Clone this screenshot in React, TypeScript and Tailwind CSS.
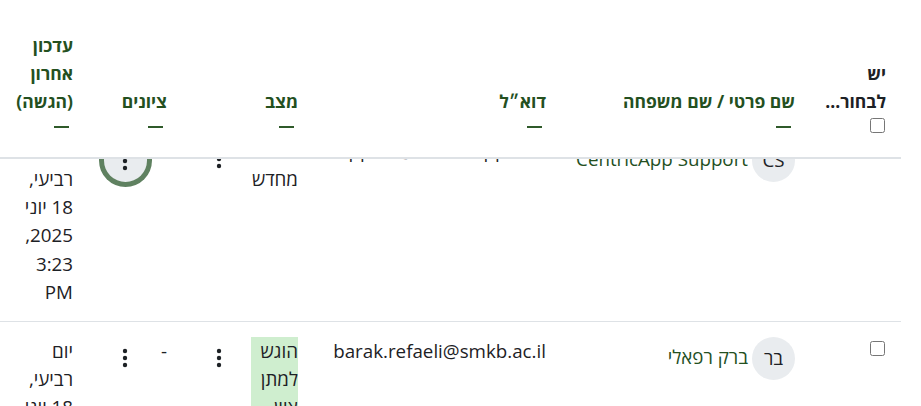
import React from 'react';

function HeaderCell({ title }: { title: string }) {
  return (
    <div className="pl-3 flex flex-col justify-end items-start">
      <div className="font-bold text-[17.5px] text-[#24501f]">{title}</div>
      <div className="w-[15px] h-[2px] bg-[#2f5a2a] mr-[4px] mt-[11px] mb-[29px]" />
    </div>
  );
}

function Kebab() {
  return (
    <svg width="6" height="20" viewBox="0 0 6 20" className="text-[#1d2125]" fill="currentColor">
      <circle cx="3" cy="3" r="2.2" />
      <circle cx="3" cy="10" r="2.2" />
      <circle cx="3" cy="17" r="2.2" />
    </svg>
  );
}

function MenuButton({ focused }: { focused?: boolean }) {
  const ringClass = focused
    ? 'w-[43px] h-[43px] rounded-full flex items-center justify-center shrink-0 bg-[#e9ecef] ring-[5px] ring-[#5f8160]'
    : 'w-[43px] h-[43px] rounded-full flex items-center justify-center shrink-0';
  return (
    <button className={ringClass}>
      <Kebab />
    </button>
  );
}

const grid = 'grid grid-cols-[91px_249px_248px_131px_94px_73px] pr-[15px]';

export default function App() {
  return (
    <div dir="rtl" className="w-[921px] h-[406px] overflow-hidden bg-white text-[18.75px] leading-[28.125px] text-[#1d2125] font-['Open_Sans',sans-serif] flex flex-col">
      <div className="w-[901px] h-[406px] self-end flex flex-col">
        <div className="h-[159px] shrink-0 border-b-2 border-[#dee2e6] z-10 bg-white">
          <div className={`${grid} h-[157px]`}>
            <div className="pl-3 flex flex-col justify-end">
              <div className="font-bold text-[17.5px]">יש לבחור...</div>
              <input type="checkbox" className="w-[15px] h-[15px] mt-[3px] mb-[24px] mr-[1px] block" />
            </div>
            <HeaderCell title="שם פרטי / שם משפחה" />
            <HeaderCell title="דוא״ל" />
            <HeaderCell title="מצב" />
            <HeaderCell title="ציונים" />
            <HeaderCell title="עדכון אחרון (הגשה)" />
          </div>
        </div>
        <div className="flex-1 overflow-hidden">
          <div className="-mt-[37px]">
            <div className={`${grid} py-[15px] border-b border-[#dee2e6]`}>
              <div />
              <div className="flex items-start gap-1 pt-[2px]">
                <div className="w-[43px] h-[43px] rounded-full bg-[#e9ecef] flex items-center justify-center shrink-0">CS</div>
                <span className="text-[#24501f] mt-[6px] whitespace-nowrap">CentricApp Support</span>
              </div>
              <div>
                <div className="whitespace-nowrap">support@centricapp.co.il</div>
              </div>
              <div className="flex items-start">
                <div className="w-[47px] shrink-0">הוגש מחדש</div>
                <div className="mr-[11px]"><MenuButton /></div>
              </div>
              <div className="flex items-start pt-[2px]">
                <div className="mr-[20.5px]"><MenuButton focused /></div>
              </div>
              <div className="pl-4">יום רביעי, 18 יוני 2025, 3:23 PM</div>
            </div>
            <div className={`${grid} pt-[15px]`}>
              <div><input type="checkbox" className="w-[15px] h-[15px] mt-[4px] mr-[1px] block" /></div>
              <div className="flex items-start gap-1">
                <div className="w-[43px] h-[43px] rounded-full bg-[#e9ecef] flex items-center justify-center shrink-0">בר</div>
                <span className="text-[#24501f] mt-[6px]">ברק רפאלי</span>
              </div>
              <div>barak.refaeli@smkb.ac.il</div>
              <div className="flex items-start">
                <div className="bg-[#cfeecf] w-[47px] shrink-0">הוגש למתן ציון</div>
                <div className="mr-[11px]"><MenuButton /></div>
              </div>
              <div className="flex items-start">
                <div className="w-[5px]">-</div>
                <div className="mr-[16px]"><MenuButton /></div>
              </div>
              <div className="pl-4">יום רביעי, 18 יוני 2025, 3:23 PM</div>
            </div>
          </div>
        </div>
      </div>
    </div>
  );
}
